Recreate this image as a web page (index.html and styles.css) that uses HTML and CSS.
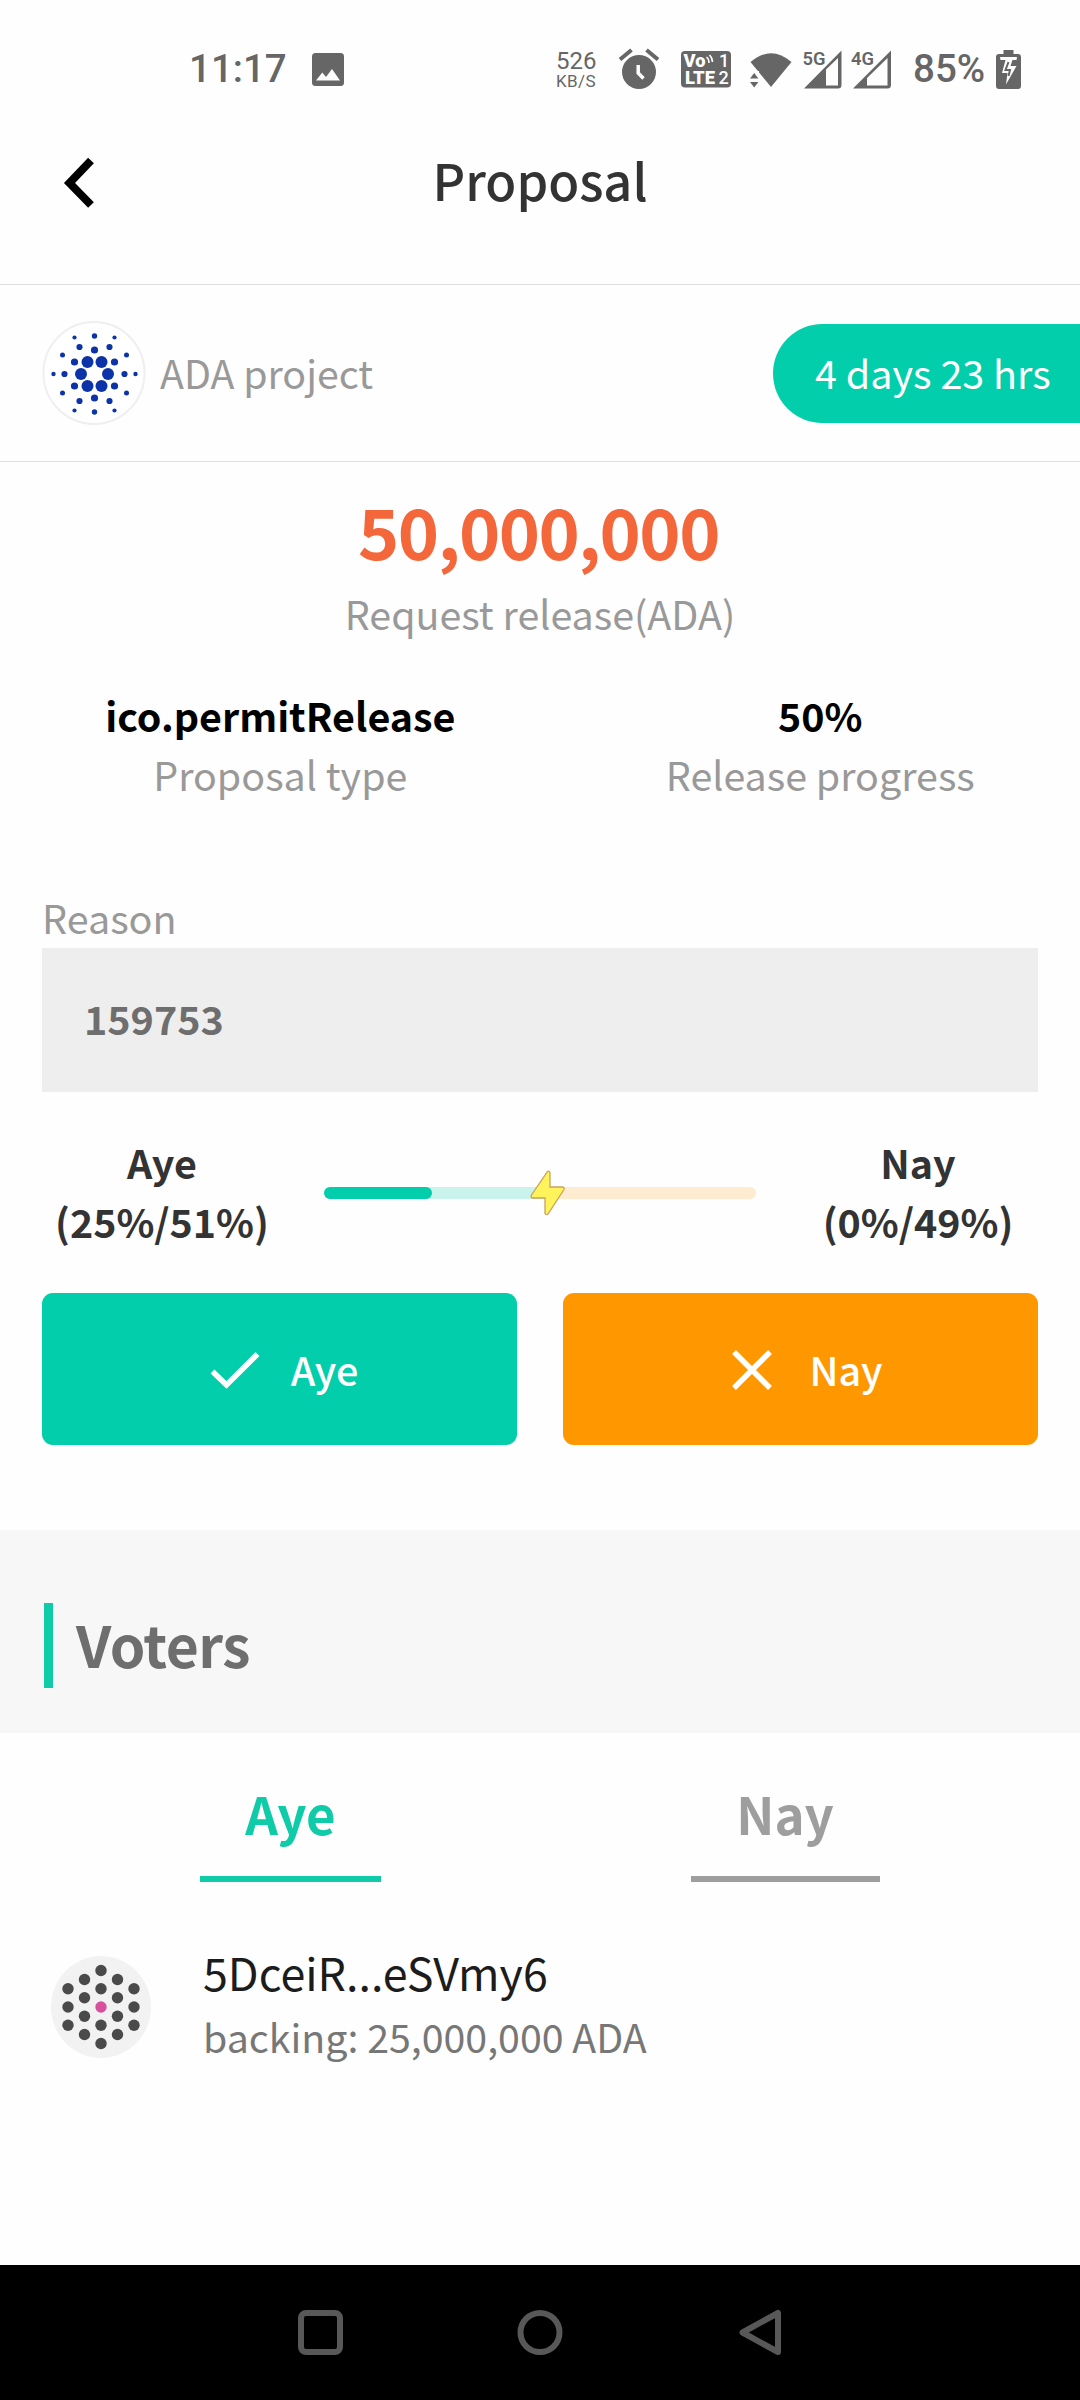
FILE: index.html
```html
<!DOCTYPE html>
<html lang="en">
<head>
<meta charset="utf-8">
<title>Proposal</title>
<link rel="stylesheet" href="styles.css">
</head>
<body>
<div class="screen">
  <div class="status">
    <div class="status-left">
      <span class="clock">11:17</span>
      <svg class="ic-image" width="32" height="34" viewBox="0 0 32 34"><rect width="32" height="33" rx="3.5"/><path class="cut" d="M4 27.5 10.300 19.500 14 24 20 16 28 27.500Z"/></svg>
    </div>
    <div class="status-right">
      <div class="speed"><span class="speed-num">526</span><span class="speed-unit">KB/S</span></div>
      <svg class="ic-alarm" width="40" height="42" viewBox="0 0 40 42"><circle cx="20" cy="25" r="17"/><path class="bar" d="M1 12.500 12.500 3M39 12.500 27.500 3"/><path class="hand" d="M19.200 18V26L24.500 31.500"/></svg>
      <svg class="ic-lte" width="51" height="38" viewBox="0 0 51 38"><rect width="50" height="36.500" y="1" rx="4"/><text x="2.500" y="17" textLength="22" lengthAdjust="spacingAndGlyphs">Vo</text><text x="4" y="34" textLength="30" lengthAdjust="spacingAndGlyphs">LTE</text><text class="thin" x="38" y="17">1</text><text class="thin" x="37.500" y="34">2</text><path class="wave" d="M25.500 7Q28 9 28 13M28.500 5Q31.500 8 31.500 12"/></svg>
      <svg class="ic-wifi" width="42" height="36" viewBox="0 0 42 36"><path d="M0.500 10Q21-7.500 41.500 10L21 35Z"/><path class="halo" d="M-2 19H9V37H-2Z"/><path d="M0 26.500 4.200 21 8.400 26.500ZM0 30H8.400L4.200 35.500Z"/></svg>
      <svg class="ic-signal" width="90" height="40" viewBox="0 0 90 40">
        <path d="M1 39.500 38.500 1.500V36Q38.500 39.500 35 39.500ZM23 20.500V36.500H35V9Z" fill-rule="evenodd"/>
        <path d="M50 39.500 88 1.500V36Q88 39.500 84.500 39.500ZM64 28V36.500H84.500V9L64 29Z" fill-rule="evenodd"/>
        <text x="-0.500" y="15.500" textLength="23" lengthAdjust="spacingAndGlyphs">5G</text><text x="48" y="15.500" textLength="23" lengthAdjust="spacingAndGlyphs">4G</text>
      </svg>
      <span class="battery-text">85%</span>
      <svg class="ic-battery" width="25" height="39" viewBox="0 0 25 39"><path d="M7.500 0H17.500V4H22Q25 4 25 7V36Q25 39 22 39H3Q0 39 0 36V7Q0 4 3 4H7.500Z"/><path class="cut" d="M4 7H21L20.500 10H16.500L14.500 16H20.500L10 34.500 11.500 23H6L9.500 10H4.500Z"/><path class="core" d="M12.500 12 9.500 20H14L12.500 26"/></svg>
    </div>
  </div>

  <header class="header">
    <svg class="back" width="32" height="52" viewBox="0 0 32 52"><path d="M28 3.500 6.500 26 28 48"/></svg>
    <h1>Proposal</h1>
  </header>

  <section class="project">
    <svg class="logo" width="104" height="108" viewBox="-52 -54 104 108">
      <ellipse class="ring" rx="50.500" ry="51"/>
      <g transform="translate(0.500 1)">
        <circle cx="-7" cy="-12" r="6"/><circle cx="7" cy="-12" r="6"/><circle cx="-13.500" cy="0" r="6"/><circle cx="13.500" cy="0" r="6"/><circle cx="-7" cy="12" r="6"/><circle cx="7" cy="12" r="6"/>
        <circle cx="0" cy="-24" r="3.600"/><circle cx="20" cy="-12" r="3.600"/><circle cx="20" cy="12" r="3.600"/><circle cx="0" cy="24" r="3.600"/><circle cx="-20" cy="12" r="3.600"/><circle cx="-20" cy="-12" r="3.600"/>
        <circle cx="-15" cy="-27" r="3.100"/><circle cx="15" cy="-27" r="3.100"/><circle cx="30" cy="0" r="3.100"/><circle cx="15" cy="27" r="3.100"/><circle cx="-15" cy="27" r="3.100"/><circle cx="-30" cy="0" r="3.100"/>
        <circle cx="0" cy="-38" r="2.700"/><circle cx="32" cy="-19" r="2.500"/><circle cx="32" cy="19" r="2.500"/><circle cx="0" cy="38" r="2.700"/><circle cx="-32" cy="19" r="2.500"/><circle cx="-32" cy="-19" r="2.500"/>
        <circle cx="-20" cy="-36.500" r="2.100"/><circle cx="20" cy="-36.500" r="2.100"/><circle cx="41" cy="0" r="2.200"/><circle cx="20" cy="36.500" r="2.100"/><circle cx="-20" cy="36.500" r="2.100"/><circle cx="-41" cy="0" r="2.200"/>
      </g>
    </svg>
    <span class="project-name">ADA project</span>
    <span class="remaining">4 days 23 hrs</span>
  </section>

  <section class="summary">
    <div class="amount">50,000,000</div>
    <div class="caption">Request release(ADA)</div>
    <div class="stats">
      <div class="stat"><strong>ico.permitRelease</strong><span>Proposal type</span></div>
      <div class="stat"><strong>50%</strong><span>Release progress</span></div>
    </div>
  </section>

  <section class="reason">
    <div class="reason-label">Reason</div>
    <div class="reason-box">159753</div>
  </section>

  <section class="tally">
    <div class="tally-side">Aye<br>(25%/51%)</div>
    <div class="track">
      <div class="aye-track"><div class="aye-fill"></div></div>
      <div class="nay-track"></div>
      <svg class="bolt" width="38" height="48" viewBox="0 0 38 48"><path d="M18.500 2.500Q20.500 1.500 21 4V18H33.500Q36 18.500 35 20.500L19 45Q17 46.500 16 44.500V29H3.500Q1.500 28.500 2.500 26Z"/></svg>
    </div>
    <div class="tally-side">Nay<br>(0%/49%)</div>
  </section>

  <div class="actions">
    <button class="btn btn-aye"><svg width="50" height="40" viewBox="0 0 50 40"><path d="M2.500 21.500 16.500 35 47.500 4"/></svg>Aye</button>
    <button class="btn btn-nay"><svg width="40" height="40" viewBox="0 0 40 40"><path d="M2 2 38 38M38 2 2 38"/></svg>Nay</button>
  </div>

  <section class="voters-head"><h2>Voters</h2></section>

  <nav class="tabs">
    <div class="tab-cell"><span class="tab tab-active">Aye</span></div>
    <div class="tab-cell"><span class="tab">Nay</span></div>
  </nav>

  <div class="voter">
    <svg class="identicon" width="102" height="104" viewBox="-51 -52 102 104">
      <ellipse class="disc" rx="50" ry="51"/>
      <circle cx="0" cy="-36.500" r="5.700"/><circle cx="-16.500" cy="-27.500" r="5.700"/><circle cx="16.500" cy="-27.500" r="5.700"/>
      <circle cx="-33" cy="-18.300" r="5.700"/><circle cx="0" cy="-18.300" r="5.700"/><circle cx="33" cy="-18.300" r="5.700"/>
      <circle cx="-16.500" cy="-9.200" r="5.700"/><circle cx="16.500" cy="-9.200" r="5.700"/>
      <circle cx="-33" cy="0" r="5.700"/><circle class="core" cx="0" cy="0" r="5.700"/><circle cx="33" cy="0" r="5.700"/>
      <circle cx="-16.500" cy="9.200" r="5.700"/><circle cx="16.500" cy="9.200" r="5.700"/>
      <circle cx="-33" cy="18.300" r="5.700"/><circle cx="0" cy="18.300" r="5.700"/><circle cx="33" cy="18.300" r="5.700"/>
      <circle cx="-16.500" cy="27.500" r="5.700"/><circle cx="16.500" cy="27.500" r="5.700"/><circle cx="0" cy="36.500" r="5.700"/>
    </svg>
    <div class="voter-text"><div class="address">5DceiR...eSVmy6</div><div class="backing">backing: 25,000,000 ADA</div></div>
  </div>

  <footer class="navbar">
    <svg width="46" height="48" viewBox="0 0 46 48"><rect x="4" y="4" width="39" height="39" rx="5"/></svg>
    <svg width="46" height="48" viewBox="0 0 46 48"><circle cx="23" cy="23.500" r="19.500"/></svg>
    <svg width="46" height="48" viewBox="0 0 46 48"><path d="M41 4V43L5.500 23.500Z"/></svg>
  </footer>
</div>
</body>
</html>
```
FILE: styles.css
```css
* { box-sizing: border-box; }
body {
  margin: 0;
  background: #fefefe;
  font-family: "Noto Sans CJK SC", "Noto Sans", sans-serif;
  font-size: 39.500px;
  line-height: 58px;
  color: #333;
}
svg { display: block; flex: none; overflow: visible; }
h1, h2 { margin: 0; }
.screen { width: 1080px; height: 2400px; display: flex; flex-direction: column; overflow: hidden; }

/* system status bar */
.status {
  height: 138px;
  display: flex;
  justify-content: space-between;
  padding: 48px 59px 0 189px;
  font-family: Roboto, sans-serif;
  font-weight: 500;
  color: #666;
  fill: #666;
}
.status-left, .status-right { display: flex; align-items: flex-start; }
.clock, .battery-text { font-size: 38.500px; line-height: 42px; }
.clock { width: 123px; }
.ic-image { margin-top: 5px; }
.cut { fill: #fefefe; }
.speed { width: 63px; display: flex; flex-direction: column; font-weight: 400; }
.speed-num { font-size: 24px; line-height: 26px; }
.speed-unit { font-size: 17px; line-height: 14px; letter-spacing: .4px; }
.ic-alarm { margin: -1px 22px 0 0; }
.ic-alarm .bar { stroke: #666; stroke-width: 4; }
.ic-alarm .hand { fill: none; stroke: #fefefe; stroke-width: 3.5; }
.ic-lte { margin: 2px 18px 0 0; }
.ic-lte text { fill: #fefefe; font-size: 18px; font-weight: 900; }
.ic-lte .thin { font-size: 18px; font-weight: 500; }
.ic-lte .wave { fill: none; stroke: #fefefe; stroke-width: 1.6; }
.ic-wifi { margin: 4px 11px 0 0; }
.ic-wifi .halo { fill: #fefefe; }
.ic-signal { margin: 1px 20px 0 0; }
.ic-signal text { font-size: 19px; font-weight: 600; }
.battery-text { width: 83px; }
.ic-battery { margin-top: 2px; }
.ic-battery .core { fill: none; stroke: #666; stroke-width: 2; }

/* title bar */
.header {
  height: 146px;
  display: grid;
  grid-template-columns: 1fr auto 1fr;
  align-items: start;
  padding-left: 63px;
  padding-right: 63px;
}
.back { margin-top: 19px; fill: none; stroke: #000; stroke-width: 8; }
.header h1 { font-size: 50.500px; font-weight: 500; line-height: 82px; color: #333; }

.project {
  height: 178px;
  display: flex;
  align-items: center;
  border-top: 1px solid #e0e0e0;
  border-bottom: 1px solid #e0e0e0;
  padding-left: 42px;
  color: #999;
}
.logo { fill: #0d33a8; }
.logo .ring { fill: #fff; stroke: #efefef; stroke-width: 2; }
.project-name { margin: -3px auto 0 14px; font-size: 39.300px; }
.remaining {
  width: 307px;
  height: 99px;
  border-radius: 50px 0 0 50px;
  background: #02ceab;
  color: #fff;
  padding-left: 42px;
  line-height: 95px;
  font-size: 39.500px;
}

.summary { text-align: center; color: #999; }
.amount { margin-top: 28px; font-size: 70px; font-weight: 700; line-height: 80px; letter-spacing: -1.500px; padding-right: 3px; color: #f4673b; }
.caption { margin-top: 14px; font-size: 39.400px; }
.stats { margin-top: 43px; display: flex; justify-content: space-around; line-height: 59px; font-size: 39.400px; }
.stat { display: flex; flex-direction: column; }
.stat strong { color: #000; }

.reason { margin: 85px 42px 0; color: #999; }
.reason-box {
  margin-top: 2px;
  height: 144px;
  padding: 41px 42px 0;
  background: #eee;
  color: #6e6e6e;
  font-weight: 700;
}

.tally { margin-top: 40px; display: flex; align-items: center; line-height: 59px; }
.tally-side { width: 324px; text-align: center; font-weight: 700; font-size: 39.400px; color: #333; }
.track { position: relative; width: 432px; display: flex; margin-top: 4px; }
.aye-track { width: 223px; height: 12px; border-radius: 6px 0 0 6px; background: #caf3eb; }
.aye-fill { width: 108px; height: 12px; border-radius: 6px; background: #02ceab; }
.nay-track { flex: 1; height: 12px; border-radius: 0 6px 6px 0; background: #feebd0; }
.bolt { position: absolute; left: 205px; top: -18px; fill: #fff35b; stroke: #c9a25f; stroke-width: 1.3; }

.actions { margin: 43px 42px 0; display: grid; grid-template-columns: 475px 475px; justify-content: space-between; }
.btn {
  height: 152px;
  border: 0;
  border-radius: 11px;
  display: flex;
  align-items: center;
  justify-content: center;
  gap: 31px;
  padding: 0 0 0 9px;
  color: #fff;
  font: 500 39.500px/58px "Noto Sans CJK SC", sans-serif;
}
.btn svg { margin-top: 2px; fill: none; stroke: #fff; stroke-width: 5.5; }
.btn-aye { background: #02ceab; }
.btn-nay { background: #ff9800; gap: 37px; padding-left: 14px; }

.voters-head { margin-top: 85px; height: 203px; padding: 73px 44px 0; background: #f7f7f7; }
.voters-head h2 {
  height: 85px;
  border-left: 9px solid #10cba8;
  padding-left: 23px;
  font-size: 57px;
  letter-spacing: -.5px;
  line-height: 81px;
  color: #6e6e6e;
}

.tabs { display: grid; grid-template-columns: 495px 494px; padding-left: 43px; }
.tab-cell { display: flex; justify-content: center; }
.tab {
  width: 189px;
  padding: 43px 0 26px;
  border-bottom: 6px solid #9e9e9e;
  text-align: center;
  font-size: 51px;
  font-weight: 700;
  line-height: 74px;
  color: #9e9e9e;
}
.tab-active { width: 181px; border-color: #10cba8; color: #10cba8; }

.voter { margin-top: 58px; display: flex; padding-left: 50px; }
.identicon { margin-top: 15px; fill: #4a4a4a; }
.identicon .disc { fill: #f2f2f2; }
.identicon .core { fill: #d6509c; }
.voter-text { margin-left: 51px; line-height: 64px; color: #777; font-size: 39.300px; }
.address { font-size: 44.800px; color: #1c1c1c; }

/* system navigation */
.navbar {
  margin-top: auto;
  height: 135px;
  display: flex;
  align-items: center;
  justify-content: center;
  gap: 174px;
  background: #000;
  fill: none;
  stroke: #585858;
  stroke-width: 6;
  stroke-linejoin: round;
}
```
